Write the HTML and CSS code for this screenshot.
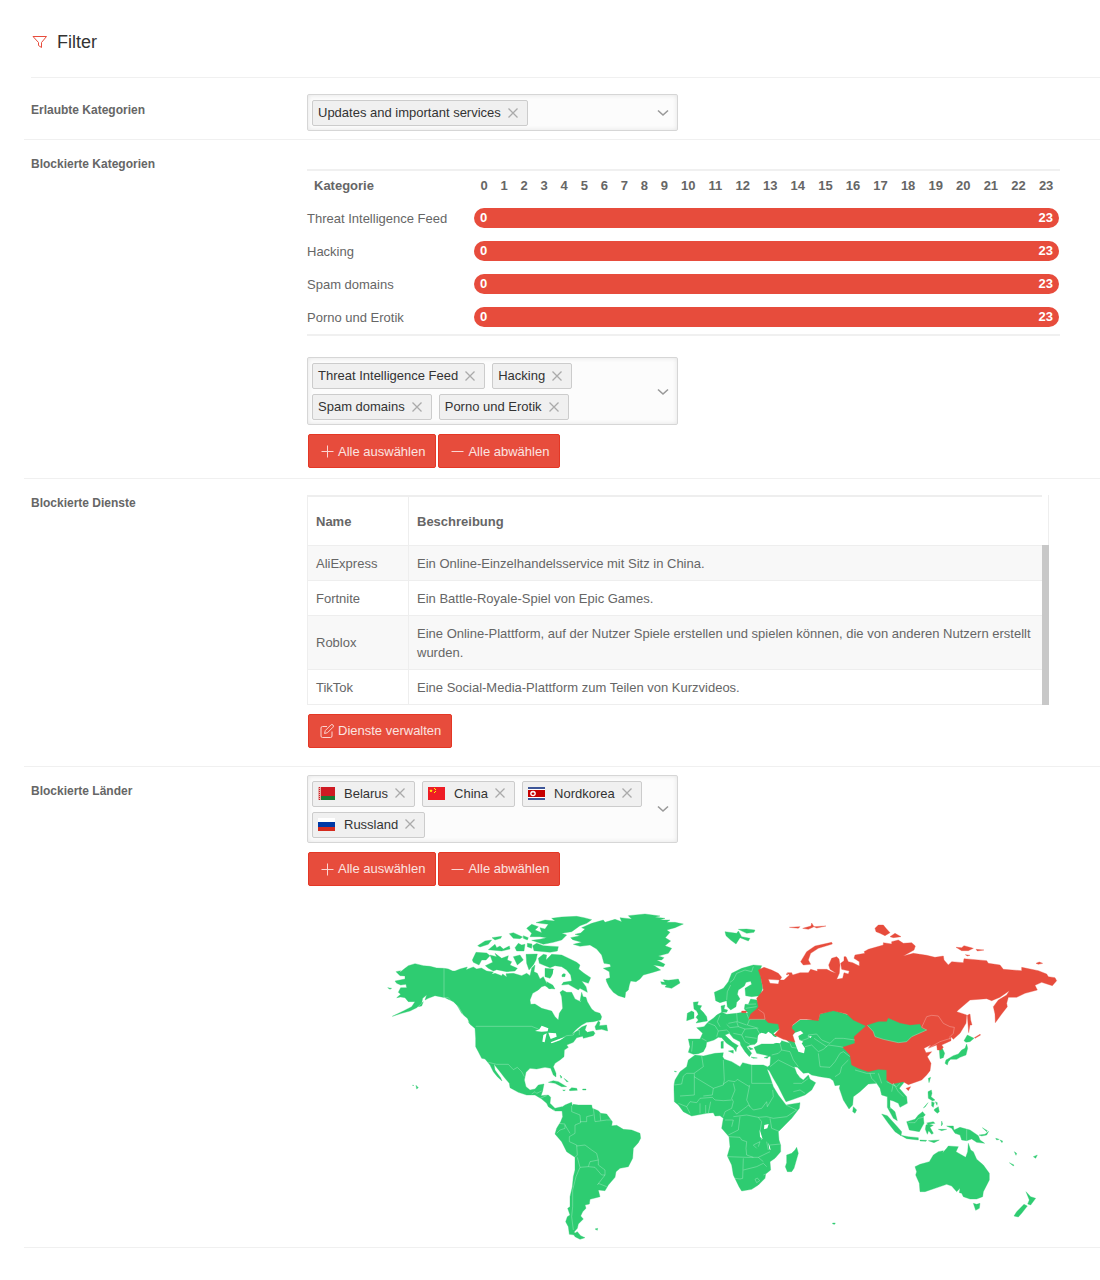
FILE: index.html
```html
<!DOCTYPE html>
<html lang="de">
<head>
  <meta charset="UTF-8">
  <meta name="viewport" content="width=device-width, initial-scale=1">
  <title>Filter</title>
  <link rel="stylesheet" href="styles.css">
</head>
<body>
  <!-- shared icons -->
  <svg class="sprite" aria-hidden="true">
    <symbol id="i-x" viewBox="0 0 12 12"><path d="M1.500 1.500l9 9M10.500 1.500l-9 9"/></symbol>
    <symbol id="i-down" viewBox="0 0 12 12"><path d="M1 3.500L6 8 11 3.500"/></symbol>
    <symbol id="i-plus" viewBox="0 0 14 14"><path d="M7.500 1.500v12M1.500 7.500h12"/></symbol>
    <symbol id="i-minus" viewBox="0 0 14 14"><path d="M1.500 7.500h12"/></symbol>
    <symbol id="i-edit" viewBox="0 0 14 14"><path d="M7 2.500H2.500a1.500 1.500 0 0 0-1.500 1.500V12a1.500 1.500 0 0 0 1.500 1.500H10.500a1.500 1.500 0 0 0 1.500-1.500V7.500M4.500 9.500l.8-3L10.800 1a1.300 1.300 0 0 1 2.200 2.200L7.500 8.700z"/></symbol>
  </svg>

  <main class="page">
    <header class="head">
      <svg class="head-icon" viewBox="0 0 16 14"><path d="M2 1.500h13.500L10.500 7.500v5l-3-2v-3z"/></svg>
      <h1>Filter</h1>
    </header>

    <section class="row">
      <h2 class="label">Erlaubte Kategorien</h2>
      <div class="field">
        <div class="multi">
          <ul class="chips">
            <li class="chip">Updates and important services <button class="remove" aria-label="Entfernen"><svg><use href="#i-x"/></svg></button></li>
          </ul>
          <button class="toggle" aria-label="Liste öffnen"><svg><use href="#i-down"/></svg></button>
        </div>
      </div>
    </section>

    <section class="row">
      <h2 class="label">Blockierte Kategorien</h2>
      <div class="field">
        <table class="hours">
          <thead>
            <tr>
              <th class="cat">Kategorie</th>
              <th>0</th><th>1</th><th>2</th><th>3</th><th>4</th><th>5</th><th>6</th><th>7</th>
              <th>8</th><th>9</th><th>10</th><th>11</th><th>12</th><th>13</th><th>14</th><th>15</th>
              <th>16</th><th>17</th><th>18</th><th>19</th><th>20</th><th>21</th><th>22</th><th>23</th>
            </tr>
          </thead>
          <tbody>
            <tr><td>Threat Intelligence Feed</td><td colspan="24"><div class="bar"><span>0</span><span>23</span></div></td></tr>
            <tr><td>Hacking</td><td colspan="24"><div class="bar"><span>0</span><span>23</span></div></td></tr>
            <tr><td>Spam domains</td><td colspan="24"><div class="bar"><span>0</span><span>23</span></div></td></tr>
            <tr><td>Porno und Erotik</td><td colspan="24"><div class="bar"><span>0</span><span>23</span></div></td></tr>
          </tbody>
        </table>
        <div class="multi">
          <ul class="chips">
            <li class="chip">Threat Intelligence Feed <button class="remove" aria-label="Entfernen"><svg><use href="#i-x"/></svg></button></li>
            <li class="chip">Hacking <button class="remove" aria-label="Entfernen"><svg><use href="#i-x"/></svg></button></li>
            <li class="chip">Spam domains <button class="remove" aria-label="Entfernen"><svg><use href="#i-x"/></svg></button></li>
            <li class="chip">Porno und Erotik <button class="remove" aria-label="Entfernen"><svg><use href="#i-x"/></svg></button></li>
          </ul>
          <button class="toggle" aria-label="Liste öffnen"><svg><use href="#i-down"/></svg></button>
        </div>
        <div class="actions">
          <button class="btn"><svg><use href="#i-plus"/></svg>Alle auswählen</button>
          <button class="btn"><svg><use href="#i-minus"/></svg>Alle abwählen</button>
        </div>
      </div>
    </section>

    <section class="row row-services">
      <h2 class="label">Blockierte Dienste</h2>
      <div class="field">
        <div class="services">
          <table>
            <thead>
              <tr><th class="name">Name</th><th>Beschreibung</th></tr>
            </thead>
            <tbody>
              <tr><td>AliExpress</td><td>Ein Online-Einzelhandelsservice mit Sitz in China.</td></tr>
              <tr><td>Fortnite</td><td>Ein Battle-Royale-Spiel von Epic Games.</td></tr>
              <tr><td>Roblox</td><td>Eine Online-Plattform, auf der Nutzer Spiele erstellen und spielen können, die von anderen Nutzern erstellt wurden.</td></tr>
              <tr><td>TikTok</td><td>Eine Social-Media-Plattform zum Teilen von Kurzvideos.</td></tr>
            </tbody>
          </table>
          <div class="thumb"></div>
        </div>
        <div class="actions">
          <button class="btn"><svg><use href="#i-edit"/></svg>Dienste verwalten</button>
        </div>
      </div>
    </section>

    <section class="row">
      <h2 class="label">Blockierte Länder</h2>
      <div class="field">
        <div class="multi">
          <ul class="chips">
            <li class="chip">
              <svg class="flag" viewBox="0 0 17 13"><path fill="#cf1a23" d="M0 0h17v9H0z"/><path fill="#1a7a34" d="M0 9h17v4H0z"/><path fill="#e7a9a5" d="M0 0h3v13H0z"/><path stroke="#cf1a23" stroke-dasharray="1 1" d="M1.500 0v13"/></svg>
              Belarus <button class="remove" aria-label="Entfernen"><svg><use href="#i-x"/></svg></button>
            </li>
            <li class="chip">
              <svg class="flag" viewBox="0 0 17 13"><path fill="#ee1c25" d="M0 0h17v13H0z"/><path fill="#ff0" d="M3 2l.5 1.200h1.300l-1 .8.400 1.300L3 4.600l-1.200.7.400-1.300-1-.8h1.300zM6 1h1v1H6zM7 2h1v1H7zM7 4h1v1H7zM6 5h1v1H6z"/></svg>
              China <button class="remove" aria-label="Entfernen"><svg><use href="#i-x"/></svg></button>
            </li>
            <li class="chip">
              <svg class="flag" viewBox="0 0 17 13"><path fill="#3e5698" d="M0 0h17v13H0z"/><path fill="#fff" d="M0 2h17v9H0z"/><path fill="#c60000" d="M0 3h17v7H0z"/><circle cx="5" cy="6.500" r="2.800" fill="#fff"/><path fill="#c60000" d="M5 4.500l.6 1.400h1.500L5.900 6.800l.5 1.500L5 7.400l-1.400.9.500-1.500-1.200-.9h1.500z"/></svg>
              Nordkorea <button class="remove" aria-label="Entfernen"><svg><use href="#i-x"/></svg></button>
            </li>
            <li class="chip">
              <svg class="flag" viewBox="0 0 17 13"><path fill="#fff" d="M0 0h17v5H0z"/><path fill="#0039a6" d="M0 4h17v5H0z"/><path fill="#d52b1e" d="M0 9h17v4H0z"/></svg>
              Russland <button class="remove" aria-label="Entfernen"><svg><use href="#i-x"/></svg></button>
            </li>
          </ul>
          <button class="toggle" aria-label="Liste öffnen"><svg><use href="#i-down"/></svg></button>
        </div>
        <div class="actions">
          <button class="btn"><svg><use href="#i-plus"/></svg>Alle auswählen</button>
          <button class="btn"><svg><use href="#i-minus"/></svg>Alle abwählen</button>
        </div>

        <svg class="map" viewBox="0 0 2259 1002" role="img" aria-label="Weltkarte der blockierten Länder">
          <!-- North and Central America -->
          <g transform="translate(219 0)">
            <path class="land" d="M48,200 62,197 58,203 75,190 85,182 105,176 118,179 130,182 150,184 170,189 192,190 205,192 218,198 225,198 240,192 262,186 258,194 280,186 290,192 304,189 320,198 340,201 335,208 345,205 365,212 368,207 380,216 378,206 400,205 425,212 440,205 450,212 455,190 465,180 462,200 472,205 480,222 490,215 500,235 520,245 510,252 495,242 485,245 475,255 458,265 450,285 452,298 465,297 485,310 515,318 525,335 535,345 538,325 548,310 545,275 540,262 548,256 560,262 575,262 585,282 602,290 610,275 618,277 622,290 635,312 645,320 660,325 665,335 662,345 640,350 620,352 605,360 590,372 575,388 590,378 605,366 620,360 615,375 622,382 640,378 645,385 640,392 610,400 608,394 590,398 580,412 560,420 565,427 553,435 552,455 540,465 525,475 520,485 528,505 528,516 520,510 512,490 495,487 480,490 470,492 450,490 438,502 433,525 438,545 450,555 465,552 475,540 492,537 488,558 483,572 505,570 512,577 510,595 525,610 545,605 555,615 545,618 525,618 505,605 500,595 485,582 465,570 440,570 415,562 390,548 388,535 375,520 360,500 342,478 345,495 352,505 362,518 366,528 352,515 340,500 330,480 322,470 315,462 305,460 295,440 287,425 287,400 285,370 268,352 262,340 250,330 240,310 220,290 195,278 165,272 145,280 135,285 140,270 128,280 125,295 110,308 90,318 65,325 37,334 70,318 95,305 105,290 85,290 75,278 62,276 50,278 62,268 55,262 62,248 80,248 78,238 62,240 50,235 45,228 75,222 75,213 60,212Z"/>
            <path class="land" d="M23,248 35,250 30,253ZM115,305 130,290 125,303ZM225,290 240,300 255,330 245,325ZM277,165 288,142 320,144 330,152 318,165 305,165 297,180 280,172ZM316,182 338,172 330,150 350,155 345,145 365,160 385,152 382,165 395,170 390,180 412,190 405,198 380,200 350,194 340,198 325,190ZM293,122 315,108 335,105 325,118 300,126ZM336,98 365,94 362,100 345,105ZM325,134 345,118 350,128 360,123 370,132 388,123 390,132 365,138ZM388,86 400,83 428,96 420,101 400,100ZM405,128 415,115 425,120 435,118 432,138 410,138ZM400,155 420,150 430,165 412,180ZM438,148 472,147 468,165 460,180 447,195 440,175ZM430,92 445,98 442,105 430,100ZM442,115 456,117 455,130 442,125ZM458,122 470,115 490,122 535,125 532,138 510,142 462,137ZM440,70 455,58 475,65 465,75 485,83 480,68 495,72 505,58 468,53 495,45 525,48 515,40 545,36 590,34 612,38 635,44 620,55 600,62 575,80 545,85 560,90 545,105 520,112 490,118 455,106 480,103 500,98 480,95 450,95 455,85ZM475,160 490,148 500,150 498,165 515,148 545,150 570,162 590,172 600,180 596,192 612,205 632,218 625,235 605,228 618,245 622,262 600,250 595,255 565,238 545,240 550,232 575,228 572,210 560,195 545,185 525,182 510,188 490,180 478,175ZM495,190 520,192 520,205 510,220 495,215ZM500,230 518,240 525,252 505,250ZM545,205 556,207 555,215 546,215ZM605,262 612,285 600,288ZM645,365 655,348 660,352 658,362 680,360 683,378 665,373 648,375ZM265,350 292,366 285,370 270,358ZM108,541 115,548 110,552ZM98,540 101,541 99,543ZM505,532 520,527 535,530 560,545 545,545 525,535ZM567,555 575,548 590,550 592,556 570,557ZM608,552 618,552 618,555 608,555ZM548,555 556,555 552,558ZM540,510 546,516 543,520ZM552,520 565,530 560,530Z"/>
            <path class="sea" d="M465,378 478,373 485,362 505,370 503,379 485,380ZM490,390 500,385 494,412 487,410ZM505,383 528,385 530,395 512,402 508,392ZM512,412 535,403 555,396 540,406 515,415ZM520,195 540,192 555,200 540,215 540,235 515,225Z"/>
            <path class="border" d="M287,364H455L475,372M530,408 560,392 580,390 585,378 598,375 598,390M192,188V278L205,278 215,290 235,305 250,330 262,345M325,472 350,478 385,478 400,494 412,487 425,500 433,515M455,567 465,560 470,565 485,558M480,580 500,572M520,612 525,618"/>
          </g>

          <!-- Greenland and Europe -->
          <g transform="translate(759 0)">
            <path class="land" d="M32,98 60,92 45,88 62,84 75,72 65,68 95,55 130,45 135,52 165,43 185,50 180,38 215,42 205,32 255,27 300,33 285,37 315,40 300,45 330,45 320,52 345,52 370,57 345,68 320,75 330,82 316,98 332,108 315,122 335,130 325,145 295,153 312,158 305,165 290,165 315,178 310,185 280,180 302,195 275,203 250,210 240,222 228,230 212,228 208,240 205,255 197,262 195,278 175,272 160,262 148,247 140,230 138,222 150,218 148,200 130,190 152,185 150,178 132,175 125,150 110,132 90,120 60,124 40,118 65,112 38,104ZM302,230 315,232 310,224 325,226 340,224 355,222 360,234 335,250 315,246 320,240 305,238ZM495,80 530,85 535,78 545,95 570,100 565,108 550,102 540,98 528,117 512,105 498,92ZM535,73 560,72 585,75 582,82 560,85ZM400,292 415,290 412,300 425,302 420,312 430,322 440,335 442,348 425,351 408,354 415,345 408,337 415,328 410,318 402,312ZM382,325 395,318 402,322 402,340 380,347ZM463,262 490,250 505,230 515,205 545,190 580,180 605,182 600,195 605,230 608,250 600,272 575,275 557,272 555,250 575,238 572,229 558,232 553,243 535,255 532,268 540,282 530,292 528,305 512,315 502,305 500,287 480,293 467,287ZM483,303 495,300 492,312 503,315 500,322 485,322ZM385,402 420,402 428,385 410,368 432,365 445,350 460,340 470,330 485,322 500,328 530,325 548,322 565,325 553,312 555,298 565,298 572,282 590,285 600,300 620,330 700,350 650,375 658,372 640,385 650,395 630,402 618,388 600,385 593,395 592,410 585,418 570,420 560,425 575,445 568,455 555,440 542,420 540,410 520,400 508,385 495,390 505,400 518,412 535,422 530,428 528,440 520,428 500,415 485,398 475,397 462,405 440,412 438,425 430,440 415,446 400,448 385,442 390,425ZM483,410 490,408 490,430 483,430ZM505,438 520,436 520,445ZM573,456 592,459 580,460ZM612,458 628,452 622,460ZM565,425 580,432 570,435ZM343,498 350,500 345,501Z"/>
            <path class="border" d="M510,232 520,225 530,205 555,195 575,200 580,185M500,285 502,260 512,240M425,400 440,408M398,408 395,440M440,352 465,362 475,378 470,395M480,330 472,350 480,365M475,378 500,375 510,385M505,355 530,350 535,365 510,368 500,358M530,325 532,350 560,360M560,325 568,345 562,360 595,370M535,365 555,372 545,390 520,385M555,372 590,370 600,388M555,395 590,400M545,390 555,410 570,418M557,310 590,305M562,298 588,297"/>
          </g>

          <!-- Africa and South America -->
          <g transform="translate(699 495)">
            <path class="land" d="M465,-45 490,-42 525,-50 550,-52 548,-40 553,-32 575,-25 600,-10 608,-22 635,-15 670,-15 682,-10 682,0 690,20 700,50 715,75 738,105 780,98 778,115 755,145 735,165 715,185 717,210 722,225 722,245 705,265 690,275 692,300 677,312 675,325 655,345 635,358 605,363 597,350 580,315 575,285 562,258 570,230 567,200 545,175 550,145 540,137 525,138 520,128 500,130 455,138 430,125 415,105 403,95 402,60 402,45 405,30 420,5 440,-10 445,-30ZM770,232 775,250 762,295 755,305 742,305 736,290 740,278 740,255 755,250 765,240ZM65,112 75,105 95,97 97,107 100,103 115,105 155,105 157,115 175,122 182,130 200,132 217,155 215,168 230,166 250,178 275,180 300,190 302,205 295,218 280,235 278,265 265,290 240,295 228,305 225,322 205,345 195,362 175,360 180,380 150,388 148,402 135,405 138,415 128,425 122,438 130,447 115,462 112,475 103,485 105,495 88,493 85,470 77,455 82,440 90,435 83,415 90,410 90,380 97,350 100,320 105,300 105,262 80,245 65,215 45,192 50,175 62,155 68,140ZM100,492 112,485 122,497 135,503 120,508 105,500ZM165,477 173,475 172,481ZM209,168 225,168 220,173Z"/>
            <path class="sea" d="M673,165 686,162 682,175 672,178ZM659,180 661,185 668,208 660,200ZM685,218 689,228 692,240 688,238Z"/>
            <path class="border" d="M402,45 425,42 430,18 440,10 462,10 490,-10 485,-42M463,10V75L420,78M462,20 520,55 550,45 553,30 550,-30M550,42 565,32 585,35 592,28 628,50V45M635,-15V40H703M628,50 620,90 630,110M580,40 585,60 575,85 580,95 575,115M520,55 517,75 490,78M415,100 440,110 450,130M440,110 450,95 470,98 480,85 517,82 525,90 550,92 575,90M480,100V130M497,105V130M512,95 505,130M575,115 555,125 550,140M580,120 590,132 620,110 625,105 640,120 665,115 680,95 682,110 700,80 698,60M555,150H580L575,170M600,140 595,180 565,195M580,140 620,135 655,142 680,140 700,145 740,140 770,120 738,105M655,142 665,155 660,185 665,210M690,145 695,175 720,185M567,200 600,202 605,210 620,215 618,235 620,255 640,262M562,260 620,262 655,262 690,245M610,265 608,325 600,327 585,325M610,300 650,290 670,280 680,290M655,262 670,275M650,235 640,225 660,215 655,230M690,225 722,222M680,215 685,240M645,328 652,324 659,332 650,338ZM670,315 677,312M105,262 112,255 110,225 88,215 88,200 105,190 105,165 122,158 120,135 95,125 95,108M50,190 60,180 75,175 75,162 55,160M75,165 90,190M120,155 140,155 140,140 160,135M160,115 165,155 200,150 215,150M180,130 182,152M110,228 135,225 155,240 170,250 175,270 150,275 145,290 120,292 112,262M120,292 108,320 98,360 98,410 95,440 100,480M145,290 165,292 185,315 195,315 195,300 175,285V270M195,315 172,345M175,340 200,350"/>
          </g>

          <!-- Asia -->
          <g transform="translate(1299 15)">
            <path class="land" d="M42,412 65,402 100,402 125,392 150,400 130,380 160,345 180,330 235,330 240,312 280,300 400,340 540,440 490,520 478,535 500,560 502,580 480,592 475,580 460,573 450,570 450,592 465,605 472,632 460,625 442,592 442,560 425,555 420,535 410,520 385,522 360,545 340,560 338,585 327,597 310,570 298,535 300,525 285,527 280,512 270,505 240,500 215,495 205,488 190,490 172,472 163,470 170,490 180,503 190,510 205,495 210,508 227,518 215,540 195,555 160,568 138,575 130,560 115,530 100,505 88,482 78,475 90,465 92,440 75,435 50,430ZM598,420 607,415 614,430 610,443 600,446ZM672,392 682,375 702,385 690,395 678,397ZM680,402 683,415 678,435 660,442 650,448 632,448 625,455 622,465 615,460 618,450 640,437 655,432 665,420 675,415ZM565,505 572,502 567,518ZM340,590 350,600 345,610 338,605Z"/>
            <path class="sea" d="M155,378 165,368 182,362 190,370 175,378 178,390 190,395 185,400 195,415 192,430 175,425 165,400ZM55,375 65,368 78,372 85,365 95,372 100,378 125,392 120,400 75,395 52,400ZM205,380 215,378 212,384Z"/>
            <path class="blocked" d="M55,180 72,172 95,180 115,190 125,202 120,210 85,208 90,220 115,222 118,210 132,210 148,195 142,188 155,188 158,195 180,188 205,188 212,178 232,184 232,178 260,178 275,185 288,190 270,178 266,165 275,145 290,140 297,147 300,165 298,190 290,208 308,205 312,188 325,192 328,183 305,178 302,160 312,152 312,140 318,140 325,155 338,158 358,168 358,155 342,145 345,135 375,130 372,125 385,118 430,105 430,98 455,102 455,95 475,90 490,100 515,98 526,108 522,120 490,138 520,130 560,136 585,142 610,138 612,150 625,165 635,155 670,158 672,146 740,152 745,160 780,165 790,178 845,182 845,172 895,182 920,192 925,200 945,203 950,212 937,227 905,217 885,226 892,240 855,250 830,262 805,262 800,280 802,290 785,312 766,338 765,312 760,290 775,270 800,255 808,242 780,262 755,272 740,266 690,270 655,300 650,305 680,315 678,340 660,370 640,388 633,380 633,392 605,405 610,412 603,420 592,420 590,405 565,415 572,405 552,415 558,428 575,425 562,440 573,460 570,482 560,495 545,510 505,524 490,515 455,522 440,510 440,480 415,478 385,485 355,475 335,465 330,435 308,412 345,400 342,380 378,348 340,330 320,312 280,302 240,312 235,332 200,328 180,328 158,345 155,355 165,365 158,375 165,397 130,388 103,375 118,358 115,342 85,338 75,328 26,328 32,312 50,297 55,290 50,265 70,240 62,200ZM5,303 20,303 18,308 5,308ZM182,155 200,125 225,108 275,97 277,102 235,115 212,130 205,150 212,163 190,165ZM148,52 180,50 175,55ZM188,55 213,48 215,39 222,50 205,58ZM222,50 258,48 230,54ZM405,55 415,45 430,45 438,55 450,68 435,77 420,70 408,65ZM450,80 465,70 483,80 460,83ZM648,112 665,113 672,107 700,115 685,122 665,122ZM708,118 732,120 712,123ZM676,134 690,136 682,138ZM138,192 145,190 142,195ZM888,160 898,156 908,160 895,163ZM682,316 690,312 692,330 696,345 690,345 686,368ZM703,383 720,373 722,375 705,385ZM498,535 512,530 505,542Z"/>
            <path class="land" d="M382,346 415,335 440,335 445,325 480,340 510,346 540,343 545,355 560,360 515,380 500,395 475,398 430,388 405,380 400,365Z"/>
            <path class="border" d="M382,346 400,365 405,380 430,388 475,398 500,395 515,380 560,360 545,352 560,320 575,316 595,318 610,340 630,350 643,352 640,370 630,380 630,388M565,415 600,395 632,385M28,328 75,328 72,310 55,298M175,388 185,392 205,385 205,375 230,372 245,390 270,400 285,385 310,385 345,390M195,410 215,405 235,425 250,418 265,405 300,410 310,412M222,385 260,410M235,430 240,470 270,472 285,455 300,430 310,425 330,440M285,500 300,490 305,470 325,450M345,480 380,490H405M390,490 395,505 410,520M415,490 425,520M440,515 470,530 480,520M455,545 460,520 475,545 490,560M95,435 115,430 125,420 150,425 160,450 175,470M125,420 120,400M90,470 115,450 165,475M160,520 185,520 205,505M160,545 180,540 195,550M150,400 155,412 175,415"/>
          </g>

          <!-- South-East Asia and Oceania -->
          <g transform="translate(1479 345)">
            <path class="land" d="M384,215 394,210 396,220 393,230 405,240 398,243 385,235ZM403,268 415,260 418,275 412,280 403,272ZM395,245 403,248 400,262 395,258ZM406,245 412,248 411,256ZM370,264 384,248 376,260ZM245,282 262,287 290,318 305,335 303,347 285,335 265,310ZM302,346 325,350 355,353 355,360 320,356ZM360,360 380,361 378,364 360,363ZM385,362 418,360 402,368ZM320,305 345,298 355,285 368,275 376,285 370,290 372,310 358,335 328,330ZM378,315 385,312 400,316 390,322 400,340 395,343 386,332 382,343 376,328ZM380,309 400,305 405,310 385,313ZM425,303 428,312 424,318ZM415,328 440,328 425,332ZM440,318 460,318 462,330 480,322 510,330 535,347 540,360 554,370 530,367 515,357 500,362 485,360 480,345 465,340 455,325ZM537,345 555,343 566,334 560,345 545,348ZM547,323 562,332 560,335ZM587,355 598,358 590,360ZM600,360 608,363 606,368ZM628,428 642,435 640,438ZM643,395 650,400 648,406ZM700,410 712,405 707,415ZM345,440 360,433 388,425 400,405 415,395 430,392 428,398 440,385 445,378 475,380 468,395 497,412 503,395 505,370 512,390 520,395 530,418 550,435 568,460 568,480 550,515 548,530 530,537 510,537 490,530 485,520 478,518 480,505 470,515 455,498 440,493 405,505 375,515 360,515 358,490 347,465 350,455ZM520,550 530,553 540,550 538,565 527,571ZM678,515 692,530 707,535 692,555 683,552 688,540ZM672,553 682,558 665,580 655,591 642,588 650,575ZM98,609 106,609 104,613 98,612Z"/>
            <path class="border" d="M500,328V362M325,308 345,308 355,295 370,292M268,265 275,265"/>
          </g>
        </svg>
      </div>
    </section>
  </main>
</body>
</html>
```

FILE: styles.css
```css
* {
  box-sizing: border-box;
}
body {
  margin: 0;
  background: #fff;
  color: #666;
  font-family: "Liberation Sans", Arial, sans-serif;
  font-size: 13px;
  line-height: 19px;
}
button {
  font: inherit;
  cursor: pointer;
}
svg {
  fill: none;
  stroke-width: 1;
}
.sprite {
  position: absolute;
  width: 0;
  height: 0;
}
.page {
  padding: 30px 0 32px 24px;
}

/* heading */
.head {
  display: flex;
  align-items: center;
  gap: 10px;
  margin: 0 0 8px 7px;
  padding-bottom: 23px;
  border-bottom: 1px solid #f0f0f0;
}
.head-icon {
  width: 16px;
  height: 14px;
  stroke: #e74c3c;
}
h1 {
  margin: 0;
  font-size: 18px;
  font-weight: normal;
  line-height: 24px;
  color: #333;
}

/* form rows */
.row {
  display: grid;
  grid-template-columns: 276px minmax(0, 1fr);
  padding: 8px 0 8px 7px;
  border-bottom: 1px solid #f0f0f0;
}
.row-services {
  padding-bottom: 16px;
}
.label {
  margin: 8px 0 0;
  font-size: 12px;
  line-height: 16px;
}
.field {
  padding-right: 40px;
}

/* multi select */
.multi {
  display: flex;
  align-items: center;
  width: 371px;
  max-width: 100%;
  padding: 5px 8px 4px 4px;
  border: 1px solid #d6d6d6;
  border-radius: 2px;
  background: #fcfcfc;
  box-shadow: inset 0 0 5px rgba(0,0,0,0.1);
}
.chips {
  display: flex;
  flex: 1;
  flex-wrap: wrap;
  gap: 5px 7px;
  margin: 0;
  padding: 0;
  list-style: none;
}
.chip {
  display: flex;
  align-items: center;
  height: 26px;
  padding: 0 8px 1px 5px;
  border: 1px solid #ccc;
  border-radius: 2px;
  background: #f0f0f0;
  color: #333;
}
.remove, .toggle {
  display: flex;
  padding: 0;
  border: none;
  background: none;
  stroke: #aaa;
}
.remove {
  margin-left: 6px;
}
.remove svg, .toggle svg {
  width: 12px;
  height: 12px;
}
.remove svg {
  stroke-width: 1.3;
}
.toggle {
  stroke: #999;
}
.toggle svg {
  stroke-width: 1.6;
}
.flag {
  width: 17px;
  height: 13px;
  margin-right: 9px;
}

/* buttons */
.actions {
  display: flex;
  gap: 2px;
  margin: 9px 0 0 1px;
  padding-bottom: 2px;
}
.btn {
  display: flex;
  align-items: center;
  gap: 4px;
  height: 34px;
  padding: 0 10px 0 11px;
  border: 1px solid #e43725;
  border-radius: 2px;
  background: #e74c3c;
  color: #fbe3e0;
}
.btn svg {
  width: 14px;
  height: 14px;
  stroke: #fbd5d1;
}

table {
  border-collapse: collapse;
  width: 100%;
}
th {
  text-align: left;
}

/* hours per category */
.hours {
  margin: 21px 0;
  border-collapse: separate;
  border-spacing: 0;
  border-top: 2px solid #f0f0f0;
  border-bottom: 2px solid #f0f0f0;
}
.hours th {
  height: 31px;
  padding: 0 6px 3px;
  text-align: center;
}
.hours .cat {
  width: 167px;
  padding-left: 7px;
  text-align: left;
}
.hours td {
  height: 33px;
  padding: 0 0 1px;
}
.bar {
  display: flex;
  justify-content: space-between;
  margin-right: 1px;
  padding: 0 6px;
  border-radius: 10px;
  background: #e74c3c;
  color: #fff;
  font-weight: bold;
  line-height: 20px;
}

/* blocked services */
.services {
  position: relative;
  margin: 8px 11px 0 0;
  padding-right: 6px;
  border-right: 1px solid #eee;
}
.services th, .services td {
  padding: 8px 8px 7px;
  border: 1px solid #eee;
  border-right: none;
}
.services th {
  height: 49px;
  border-top-width: 2px;
}
.services .name {
  width: 101px;
}
.services tbody tr:nth-child(odd) {
  background: #f8f8f8;
}
.thumb {
  position: absolute;
  top: 50px;
  right: -1px;
  bottom: 0;
  width: 7px;
  background: #c8c8c8;
}

/* world map */
.map {
  display: block;
  width: 100%;
  margin-top: 17px;
  overflow: visible;
}
.land {
  fill: #2ecc71;
  stroke: #2ecc71;
}
.blocked {
  fill: #e74c3c;
  stroke: #e74c3c;
}
.sea {
  fill: #fff;
}
.border {
  stroke: rgba(255,255,255,0.4);
  stroke-width: 2;
}
```
